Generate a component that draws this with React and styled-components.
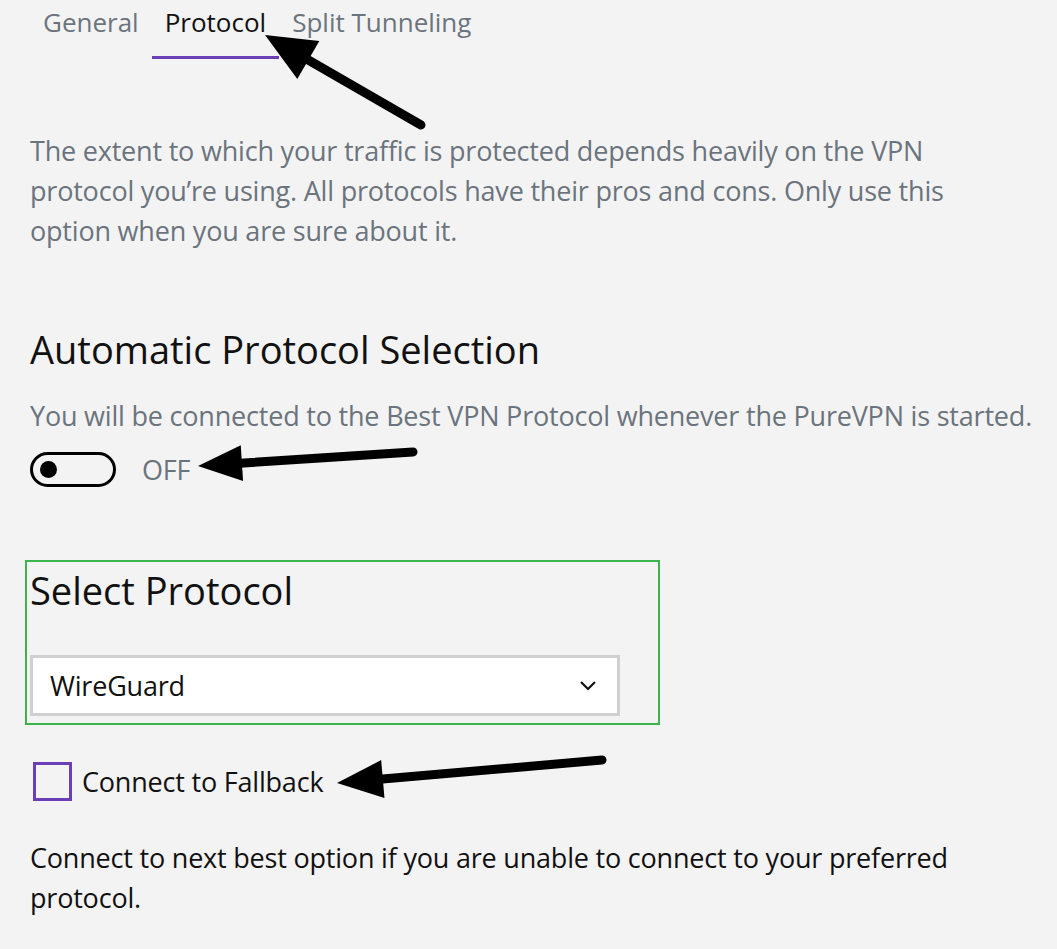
import React, { useState } from 'react'
import styled, { createGlobalStyle } from 'styled-components'

const GlobalStyle = createGlobalStyle`
    html, body {
        margin: 0;
        padding: 0;
        background: #f3f3f3;
    }
    body {
        font-family: "Open Sans", "Noto Sans", sans-serif;
    }
`

const Page = styled.div`
    position: relative;
    width: 1057px;
    height: 949px;
    overflow: hidden;
    background: #f3f3f3;
    padding: 0 0 0 30px;
    box-sizing: border-box;
`

const Tabs = styled.div`
    display: flex;
    padding-top: 2px;
`

const Tab = styled.div`
    position: relative;
    font-size: 26px;
    line-height: 40px;
    padding: 0 13px 17px;
    color: ${props => props.active ? '#111' : '#6b747d'};
    &:after {
        content: '';
        display: ${props => props.active ? 'block' : 'none'};
        position: absolute;
        left: 0;
        right: 0;
        bottom: 0;
        height: 3px;
        background: #6a3fb5;
    }
`

const Intro = styled.p`
    margin: 72px 0 0;
    max-width: 960px;
    font-size: 27px;
    line-height: 40px;
    color: #6b747d;
    letter-spacing: -0.2px;
`

const Heading = styled.h2`
    margin: ${props => props.top || 0} 0 0;
    font-weight: 400;
    font-size: 38px;
    line-height: 48px;
    color: #111;
`

const Hint = styled.p`
    margin: 25px 0 0;
    font-size: 27px;
    line-height: 36px;
    color: #6b747d;
    letter-spacing: -0.2px;
    white-space: nowrap;
`

const ToggleRow = styled.div`
    display: flex;
    align-items: center;
    gap: 26px;
    margin-top: 18px;
    height: 35px;
`

const Toggle = styled.div`
    width: 86px;
    height: 35px;
    box-sizing: border-box;
    border: 3px solid #000;
    border-radius: 18px;
    display: flex;
    align-items: center;
    padding-left: 7px;
`

const Knob = styled.span`
    width: 17px;
    height: 17px;
    border-radius: 50%;
    background: #000;
`

const ToggleLabel = styled.span`
    font-size: 27px;
    line-height: 35px;
    color: #6b747d;
    letter-spacing: -0.2px;
`

const ProtocolBox = styled.div`
    margin: 73px 0 0 -5px;
    width: 635px;
    box-sizing: border-box;
    border: 2px solid #3cb44b;
    padding: 4px 38px 7px 3px;
    display: flex;
    flex-direction: column;
`

const Select = styled.div`
    margin-top: 41px;
    height: 61px;
    box-sizing: border-box;
    background: #fff;
    border: 3px solid #d0d0d0;
    display: flex;
    align-items: center;
    justify-content: space-between;
    padding: 0 20px 0 17px;
    font-size: 27px;
    color: #111;
    letter-spacing: -0.2px;
`

const CheckRow = styled.label`
    display: flex;
    align-items: center;
    gap: 10px;
    height: 39px;
    margin: 37px 0 0 3px;
    font-size: 27px;
    color: #111;
    letter-spacing: -0.2px;
`

const Box = styled.span`
    width: 39px;
    height: 39px;
    box-sizing: border-box;
    border: 3px solid #6a3fb5;
    background: ${props => props.checked ? '#6a3fb5' : 'transparent'};
`

const Note = styled.p`
    margin: 37px 0 0;
    max-width: 960px;
    font-size: 27px;
    line-height: 40px;
    color: #111;
    letter-spacing: -0.2px;
`

const Arrows = styled.svg`
    position: absolute;
    left: 0;
    top: 0;
    pointer-events: none;
`

function Arrow({ x1, y1, x2, y2, len = 46, half = 20 }) {
    const ang = Math.atan2(y2 - y1, x2 - x1)
    const bx = x2 - Math.cos(ang) * len
    const by = y2 - Math.sin(ang) * len
    const px = -Math.sin(ang) * half
    const py = Math.cos(ang) * half
    return (
        <g>
            <line x1={x1} y1={y1} x2={bx + Math.cos(ang) * 6} y2={by + Math.sin(ang) * 6} stroke="#000" strokeWidth="9" strokeLinecap="round" />
            <polygon points={`${x2},${y2} ${bx + px},${by + py} ${bx - px},${by - py}`} fill="#000" strokeLinejoin="round" />
        </g>
    )
}

function App() {
    const [on, setOn] = useState(false)
    const [fallback, setFallback] = useState(false)

    return (
        <Page>
            <GlobalStyle />
            <Tabs>
                <Tab>General</Tab>
                <Tab active>Protocol</Tab>
                <Tab>Split Tunneling</Tab>
            </Tabs>

            <Intro>
                The extent to which your traffic is protected depends heavily on the VPN
                protocol you’re using. All protocols have their pros and cons. Only use this
                option when you are sure about it.
            </Intro>

            <Heading top="74px">Automatic Protocol Selection</Heading>
            <Hint>You will be connected to the Best VPN Protocol whenever the PureVPN is started.</Hint>
            <ToggleRow onClick={() => setOn(!on)}>
                <Toggle><Knob /></Toggle>
                <ToggleLabel>{on ? 'ON' : 'OFF'}</ToggleLabel>
            </ToggleRow>

            <ProtocolBox>
                <Heading>Select Protocol</Heading>
                <Select>
                    <span>WireGuard</span>
                    <svg width="18" height="12" viewBox="0 0 18 12">
                        <path d="M2 2 L9 9 L16 2" fill="none" stroke="#111" strokeWidth="2.2" />
                    </svg>
                </Select>
            </ProtocolBox>

            <CheckRow onClick={() => setFallback(!fallback)}>
                <Box checked={fallback} />
                Connect to Fallback
            </CheckRow>

            <Note>
                Connect to next best option if you are unable to connect to your preferred
                protocol.
            </Note>

            <Arrows width="1057" height="949">
                <Arrow x1={421} y1={125} x2={265} y2={35} len={50} half={22} />
                <Arrow x1={413} y1={452} x2={198} y2={466} len={44} half={18} />
                <Arrow x1={602} y1={760} x2={337} y2={783} len={46} half={19} />
            </Arrows>
        </Page>
    )
}

export default App
